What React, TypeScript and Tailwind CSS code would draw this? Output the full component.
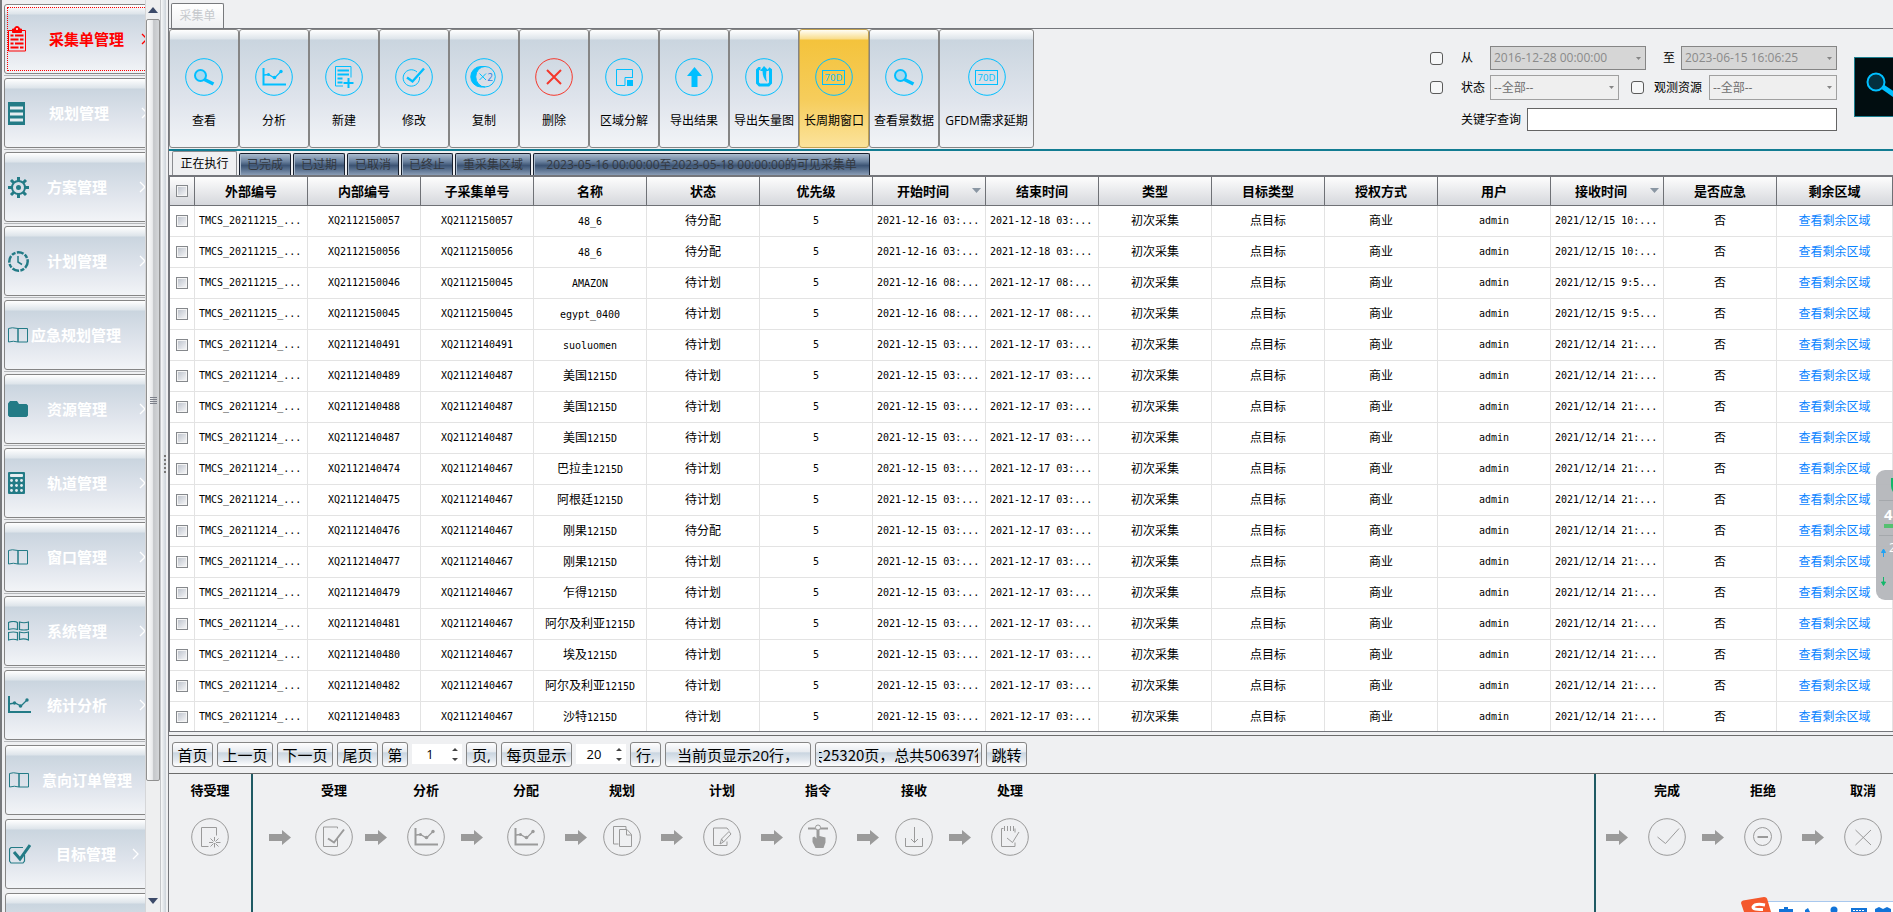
import React from 'react'
import clsx from 'clsx'

const glossy =
    'bg-[linear-gradient(to_bottom,#ffffff_0px,#dde4ea_9px,#cad5df_10px,#dfe4ec_60%,#f2f4f7_100%)]'

/* ---------- sidebar ---------- */

const TEAL = '#237b86'

const BookIcon = () => (
    <svg width="20" height="16" viewBox="0 0 20 16" fill="none" stroke={TEAL}>
        <path d="M.5 1.500q3-1.500 9.500 0v13.500q-4.500-1.500-9.500 0zM10 1.500h9.500v13.500h-9.500z" />
    </svg>
)

const ChartIcon = () => (
    <svg width="23" height="18" viewBox="0 0 23 18" fill="none" stroke={TEAL}>
        <path d="M1 0v16h22" strokeWidth="2" />
        <path d="M1 8l6-1 6 3 6-6" strokeWidth="1.300" />
        <g fill={TEAL} stroke="none">
            <circle cx="6.500" cy="7" r="1.700" /><circle cx="12.500" cy="10" r="1.800" /><circle cx="19" cy="4" r="1.700" />
        </g>
    </svg>
)

const menu = [
    {
        label: '采集单管理', space: 'ml-[18px] w-[92px]', active: true, arrow: true,
        icon: (
            <svg width="18" height="26" viewBox="0 0 18 26" fill="none" stroke="#f00">
                <path d="M4.500 4.500h-4v20.500h17v-20.500h-4" />
                <path d="M2.500 9.500h3M7 9.500h8.500M2.500 13.500h8M12 13.500h3.500M2.500 17.500h3M7 17.500h8.500M2.500 21.500h8M12 21.500h3.500" strokeWidth="2" />
                <path d="M4.500 3h2q0-2.500 2.500-2.500t2.500 2.500h2v3.500h-9z" fill="#f00" />
                <circle cx="9" cy="3" r="1" fill="#fff" stroke="none" />
            </svg>
        ),
    },
    {
        label: '规划管理', space: 'ml-[18px] w-[92px]', arrow: true,
        icon: (
            <svg width="17" height="23" viewBox="0 0 17 23">
                <path d="M0 0h17v23h-17z" fill={TEAL} />
                <path d="M2 6h13M2 12h13M2 18h13" stroke="#e6edf1" strokeWidth="3" />
            </svg>
        ),
    },
    {
        label: '方案管理', space: 'ml-4 w-[92px]', arrow: true,
        icon: (
            <svg width="21" height="21" viewBox="0 0 21 21" fill="none" stroke={TEAL}>
                <circle cx="10.500" cy="10.500" r="6.500" strokeWidth="2" />
                <circle cx="10.500" cy="10.500" r="2.500" fill={TEAL} stroke="none" />
                <path d="M10.500 0v4M10.500 17v4M0 10.500h4M17 10.500h4M3 3l3 3M15 15l3 3M18 3l-3 3M6 15l-3 3" strokeWidth="3" />
            </svg>
        ),
    },
    {
        label: '计划管理', space: 'ml-4 w-[92px]', arrow: true,
        icon: (
            <svg width="21" height="21" viewBox="0 0 21 21" fill="none" stroke={TEAL} strokeWidth="2.500">
                <circle cx="10.500" cy="10.500" r="9.200" strokeDasharray="7 1.400 4 1.400" />
                <path d="M10 5v6l4 2.500" strokeWidth="1.500" />
            </svg>
        ),
    },
    { label: '应急规划管理', space: 'ml-0 w-[92px]', icon: <BookIcon /> },
    {
        label: '资源管理', space: 'ml-4 w-[92px]', arrow: true,
        icon: (
            <svg width="20" height="16" viewBox="0 0 20 16">
                <path d="M0 2.500L2 0h7l2 3h7.500L20 4.500V14.500L18.500 16h-17L0 14.500z" fill={TEAL} />
            </svg>
        ),
    },
    {
        label: '轨道管理', space: 'ml-4 w-[92px]', arrow: true,
        icon: (
            <svg width="17" height="22" viewBox="0 0 17 22">
                <rect width="17" height="22" rx="1" fill={TEAL} />
                <rect x="2" y="2" width="13" height="3" rx="1" fill="#e6edf1" />
                <g fill="#e6edf1">
                    {[8.5, 13.5, 18.5].map((y) => [3.5, 8.5, 13.5].map((x) => <circle key={x + '-' + y} cx={x} cy={y} r="1.400" />))}
                </g>
            </svg>
        ),
    },
    { label: '窗口管理', space: 'ml-4 w-[92px]', arrow: true, icon: <BookIcon /> },
    {
        label: '系统管理', space: 'ml-4 w-[92px]', arrow: true,
        icon: (
            <svg width="21" height="20" viewBox="0 0 21 20" fill="none" stroke={TEAL}>
                <path d="M.5 1.500q5-2 9 0v7q-4-1.500-9 0zM11.500 1q4.500 1.500 9 0v7.500q-4.500 1-9 0zM.5 11.500q5-1 9 0v7.500q-4-1.500-9 0zM11.500 11q4.500 1.500 9 0v8q-4.500-2-9-.5z" strokeWidth="1.200" />
            </svg>
        ),
    },
    { label: '统计分析', space: 'ml-4 w-[92px]', arrow: true, icon: <ChartIcon /> },
    { label: '意向订单管理', space: 'ml-[10px] w-[92px]', icon: <BookIcon /> },
    {
        label: '目标管理', space: 'ml-6 w-[76px]', arrow: true,
        icon: (
            <svg width="22" height="20" viewBox="0 0 22 20" fill="none" stroke={TEAL}>
                <path d="M14 3.500h-12l-1.500 1.500v12l1.500 2h12l1.500-2v-6" strokeWidth="1.200" />
                <path d="M5 8l6 7L21 1" strokeWidth="3" />
            </svg>
        ),
    },
    { label: '', space: 'w-0', icon: null },
]

const Sidebar = () => (
    <aside className="flex w-[166px] shrink-0 border-l-2 border-[#77797c]">
        <nav className="flex min-w-0 flex-1 flex-col overflow-hidden pl-[2px] pt-1">
            {menu.map((item, i) => (
                <div key={i} className={clsx('flex h-[74px] shrink-0 flex-col', i > 9 && 'pl-px pt-px')}>
                    <button
                        className={clsx(
                            'flex h-[70px] w-[160px] shrink-0 items-center rounded-[3px] border border-[#858585] p-[2px] text-[15px] font-bold',
                            glossy,
                            item.active ? 'text-[#f00]' : 'text-white'
                        )}
                    >
                        <span className={clsx('flex h-full w-full items-center', item.active && 'border border-dotted border-[#f00]')}>
                            <span className={clsx('flex shrink-0', item.active ? 'w-[23px]' : 'w-6 pl-px')}>{item.icon}</span>
                            <span className={clsx('shrink-0 whitespace-nowrap text-left leading-5', item.space)}>{item.label}</span>
                            {item.arrow && (
                                <svg width="7" height="12" viewBox="0 0 7 12" fill="none" stroke="currentColor" strokeWidth="1.300" className="shrink-0">
                                    <path d="M1 1l5 5-5 5" />
                                </svg>
                            )}
                        </span>
                    </button>
                    {i < 10 && <div className="mt-px h-px shrink-0 bg-[#b5b7ba]" />}
                </div>
            ))}
        </nav>
        <div className="flex w-[15px] shrink-0 flex-col border-l border-[#d5d6d8] bg-[#eeeff0] pt-1">
            <button aria-label="up" className="flex h-[15px] shrink-0 justify-center pt-[3px]">
                <svg width="10" height="6"><path d="M5 0l5 6H0z" fill="#3c4a69" /></svg>
            </button>
            <div className="flex h-[762px] shrink-0 flex-col items-center justify-center gap-px rounded-[2px] border border-[#909090] bg-[linear-gradient(to_right,#fdfdfd_0%,#e9eaec_45%,#c5c7ca_55%,#d4d6d9_100%)]">
                {[0, 1, 2, 3].map((n) => <span key={n} className="h-px w-[7px] bg-[#7d808a]" />)}
            </div>
            <span className="flex-1" />
            <button aria-label="down" className="flex h-[21px] shrink-0 justify-center pt-[7px]">
                <svg width="10" height="6"><path d="M0 0h10L5 6z" fill="#3c4a69" /></svg>
            </button>
        </div>
        <div className="flex w-[6px] shrink-0 flex-col items-end justify-center gap-[2px] border-l border-[#c4c6c9] bg-[linear-gradient(to_right,#f7f8f9,#ccd3da)] pt-4">
            {[0, 1, 2, 3, 4].map((n) => <span key={n} className="size-[2px] bg-[#777]" />)}
        </div>
    </aside>
)

/* ---------- toolbar ---------- */

const BLUE = '#00bfff'

const Round = ({ color, children }: { color: string; children: React.ReactNode }) => (
    <svg width="38" height="38" viewBox="0 0 38 38" fill="none" stroke={color} className="shrink-0">
        <circle cx="19" cy="19" r="18.300" />
        {children}
    </svg>
)

const Search = () => (
    <>
        <path d="M19.500 21.500L28.500 26" strokeWidth="3.500" />
        <circle cx="15.500" cy="17.500" r="5.500" fill="#a9d8ee" strokeWidth="2" />
    </>
)

const Trend = ({ color }: { color: string }) => (
    <>
        <path d="M8.500 10v16.500H31" strokeWidth="2" />
        <path d="M9 17l4.500-.5 6 3.500 6.500-6.500" strokeWidth="1.300" />
        <g fill={color} stroke="none">
            <circle cx="13.500" cy="16.500" r="1.500" /><circle cx="19.500" cy="19.500" r="1.800" /><circle cx="26" cy="13.500" r="1.700" />
        </g>
    </>
)

const Days = () => (
    <>
        <rect x="7.500" y="12.500" width="22" height="14" />
        <text x="18.500" y="23" textAnchor="middle" fontSize="9.500" fill={BLUE} stroke="none" className="font-['Open_Sans',sans-serif]">70D</text>
    </>
)

const tools = [
    { label: '查看', icon: <Search /> },
    { label: '分析', icon: <Trend color={BLUE} /> },
    {
        label: '新建',
        icon: (
            <>
                <path d="M26 19.500v-11h-15.500v19.500h7.500" />
                <path d="M12.500 12.500h11.500M12.500 16.500h11.500M12.500 20.500h5M12.500 24.500h5" strokeWidth="2" />
                <path d="M23.500 20v10M18.500 25h10" strokeWidth="2" />
            </>
        ),
    },
    {
        label: '修改',
        icon: (
            <>
                <path d="M22 14a8.200 8.200 0 1 0 2.500 5" />
                <path d="M12 19.500l5.500 4L29 10.500" strokeWidth="2.400" />
            </>
        ),
    },
    {
        label: '复制',
        icon: (
            <>
                <path d="M20 8.500h-4a10.200 10.200 0 0 0 0 20.500h4a9.200 10.200 0 0 1 0-20.500z" fill={BLUE} />
                <path d="M20 8.500a10.200 10.200 0 0 1 0 20.500" />
                <path d="M14.500 15.500l6.500 6.500M21 15.500l-6.500 6.500" />
                <text x="25" y="22.500" textAnchor="middle" fontSize="10" fill="#2f7fe0" stroke="none" className="font-['Open_Sans',sans-serif]">2</text>
            </>
        ),
    },
    { label: '删除', color: '#f4382c', icon: <path d="M12 12l14 14M26 12L12 26" strokeWidth="2" /> },
    {
        label: '区域分解',
        icon: (
            <>
                <path d="M27.500 20v-8.500h-16v16h8.500v-8h7.500" />
                <path d="M22 22h6v6h-6z" fill={BLUE} stroke="none" />
            </>
        ),
    },
    { label: '导出结果', icon: <path d="M19.500 9l7.500 9h-4.500v11h-6v-11h-4.500z" fill={BLUE} stroke="none" /> },
    {
        label: '导出矢量图',
        icon: (
            <>
                <path d="M15.500 10.500h-1.500l-1.500 1.500v13l2 2h9l2-2v-13l-2-1.500" strokeWidth="3" />
                <path d="M22 24q-4.500-4-4.500-11h-2.500l4-5 5 5h-2.500q-1 6 .5 11z" fill={BLUE} stroke="none" />
            </>
        ),
    },
    { label: '长周期窗口', on: true, icon: <Days /> },
    { label: '查看景数据', icon: <Search /> },
    { label: 'GFDM需求延期', wide: true, icon: <Days /> },
]

const Toolbar = () => (
    <div className="flex">
        {tools.map((tool) => (
            <button
                key={tool.label}
                className={clsx(
                    'flex h-[119px] shrink-0 flex-col items-center gap-4 rounded-[3px] border pt-7',
                    tool.wide ? 'w-[95px]' : 'w-[70px]',
                    tool.on
                        ? 'border-[#c0a050] bg-[linear-gradient(to_bottom,#fffdf5_0px,#f9dd8a_9px,#f4c33c_10px,#f6cd5c_60%,#fbe39c_100%)]'
                        : 'border-[#858585] ' + glossy
                )}
            >
                <Round color={tool.color || BLUE}>{tool.icon}</Round>
                <span className="whitespace-nowrap leading-[18px]">{tool.label}</span>
            </button>
        ))}
    </div>
)

/* ---------- filters ---------- */

const Tick = ({ label, className }: { label: string; className?: string }) => (
    <input type="checkbox" aria-label={label} className={clsx('size-[13px] shrink-0 appearance-none rounded-[3px] border border-[#5a5a5a] bg-[#f6f7f8]', className)} />
)

const Drop = ({ id, value, date, className }: { id: string; value: string; date?: boolean; className: string }) => (
    <span className={clsx('relative shrink-0', className)}>
        <select
            id={id}
            disabled
            className={clsx(
                'block w-full appearance-none border pl-[3px] leading-4 opacity-100',
                date ? 'h-6 border-[#858585] bg-[#d6d6d6] text-[#8a8a8a]' : 'h-[25px] border-[#a0a0a0] bg-[#efefef] text-[#707070]'
            )}
        >
            <option>{value}</option>
        </select>
        <svg width="5" height="3" className="absolute right-[5px] top-[11px]"><path d="M0 0h5L2.500 3z" fill="#858585" /></svg>
    </span>
)

const Filters = () => (
    <div className="-mr-[21px] ml-auto flex items-start pt-[17px]">
        <div className="w-[407px]">
            <div className="flex items-center">
                <Tick label="时间" />
                <label htmlFor="from" className="ml-[18px] w-[29px]">从</label>
                <Drop id="from" date value="2016-12-28 00:00:00" className="w-[156px]" />
                <label htmlFor="to" className="ml-[17px] w-[18px]">至</label>
                <Drop id="to" date value="2023-06-15 16:06:25" className="w-[156px]" />
            </div>
            <div className="mt-[5px] flex items-center">
                <Tick label="状态" />
                <label htmlFor="status" className="ml-[18px] w-[29px]">状态</label>
                <Drop id="status" value="--全部--" className="w-[129px]" />
                <Tick label="观测资源" className="ml-3" />
                <label htmlFor="resource" className="ml-[10px] w-[55px]">观测资源</label>
                <Drop id="resource" value="--全部--" className="w-[128px]" />
            </div>
            <div className="mt-2 flex items-center pl-[31px]">
                <label htmlFor="keyword" className="w-[66px]">关键字查询</label>
                <input id="keyword" className="h-[23px] min-w-0 flex-1 border border-[#646464] bg-white px-1" />
            </div>
        </div>
        <button aria-label="查询" className="ml-[17px] mt-[11px] flex size-[60px] shrink-0 items-center border border-[#1a7f90] bg-[#010d10] pl-[11px]">
            <svg width="34" height="30" viewBox="0 0 34 30" fill="none" stroke={BLUE}>
                <path d="M17 15l16 11" strokeWidth="5" />
                <circle cx="10" cy="10" r="8.500" fill="#03303f" strokeWidth="2" />
            </svg>
        </button>
    </div>
)

/* ---------- table ---------- */

const tabs = ['已完成', '已过期', '已取消', '已终止', '重采集区域']

const heads = ['外部编号', '内部编号', '子采集单号', '名称', '状态', '优先级', '开始时间', '结束时间', '类型', '目标类型', '授权方式', '用户', '接收时间', '是否应急', '剩余区域']

// [id, sub id, chinese part of the name, latin part, status, start, end, received]
const rows = [
    ['XQ2112150057', 'XQ2112150057', '', '48_6', '待分配', '2021-12-16 03:...', '2021-12-18 03:...', '2021/12/15 10:...'],
    ['XQ2112150056', 'XQ2112150056', '', '48_6', '待分配', '2021-12-16 03:...', '2021-12-18 03:...', '2021/12/15 10:...'],
    ['XQ2112150046', 'XQ2112150045', '', 'AMAZON', '待计划', '2021-12-16 08:...', '2021-12-17 08:...', '2021/12/15 9:5...'],
    ['XQ2112150045', 'XQ2112150045', '', 'egypt_0400', '待计划', '2021-12-16 08:...', '2021-12-17 08:...', '2021/12/15 9:5...'],
    ['XQ2112140491', 'XQ2112140491', '', 'suoluomen', '待计划', '2021-12-15 03:...', '2021-12-17 03:...', '2021/12/14 21:...'],
    ['XQ2112140489', 'XQ2112140487', '美国', '1215D', '待计划', '2021-12-15 03:...', '2021-12-17 03:...', '2021/12/14 21:...'],
    ['XQ2112140488', 'XQ2112140487', '美国', '1215D', '待计划', '2021-12-15 03:...', '2021-12-17 03:...', '2021/12/14 21:...'],
    ['XQ2112140487', 'XQ2112140487', '美国', '1215D', '待计划', '2021-12-15 03:...', '2021-12-17 03:...', '2021/12/14 21:...'],
    ['XQ2112140474', 'XQ2112140467', '巴拉圭', '1215D', '待计划', '2021-12-15 03:...', '2021-12-17 03:...', '2021/12/14 21:...'],
    ['XQ2112140475', 'XQ2112140467', '阿根廷', '1215D', '待计划', '2021-12-15 03:...', '2021-12-17 03:...', '2021/12/14 21:...'],
    ['XQ2112140476', 'XQ2112140467', '刚果', '1215D', '待分配', '2021-12-15 03:...', '2021-12-17 03:...', '2021/12/14 21:...'],
    ['XQ2112140477', 'XQ2112140467', '刚果', '1215D', '待计划', '2021-12-15 03:...', '2021-12-17 03:...', '2021/12/14 21:...'],
    ['XQ2112140479', 'XQ2112140467', '乍得', '1215D', '待计划', '2021-12-15 03:...', '2021-12-17 03:...', '2021/12/14 21:...'],
    ['XQ2112140481', 'XQ2112140467', '阿尔及利亚', '1215D', '待计划', '2021-12-15 03:...', '2021-12-17 03:...', '2021/12/14 21:...'],
    ['XQ2112140480', 'XQ2112140467', '埃及', '1215D', '待计划', '2021-12-15 03:...', '2021-12-17 03:...', '2021/12/14 21:...'],
    ['XQ2112140482', 'XQ2112140467', '阿尔及利亚', '1215D', '待计划', '2021-12-15 03:...', '2021-12-17 03:...', '2021/12/14 21:...'],
    ['XQ2112140483', 'XQ2112140467', '沙特', '1215D', '待计划', '2021-12-15 03:...', '2021-12-17 03:...', '2021/12/14 21:...'],
]

const RowTick = ({ label }: { label: string }) => (
    <input
        type="checkbox"
        aria-label={label}
        className="mx-auto block size-3 appearance-none border border-[#85888c] bg-[linear-gradient(135deg,#b9bfc9,#fafafb)] shadow-[inset_0_0_0_1px_#f4f4f4]"
    />
)

const Td = ({ mono, left, children }: { mono?: boolean; left?: boolean; children: React.ReactNode }) => (
    <td
        className={clsx(
            'h-[31px] overflow-hidden whitespace-nowrap border-b border-r border-[#e3e3e3] leading-4',
            mono && "font-['DejaVu_Sans_Mono','Noto_Sans_CJK_SC',monospace] text-[10px]",
            left ? 'pl-1 text-left' : 'text-center'
        )}
    >
        {children}
    </td>
)

const OrderTable = () => (
    <div className="min-h-0 flex-1 overflow-hidden border-b border-l border-t-2 border-[#74767b] bg-white">
        <table className="w-full table-fixed border-separate border-spacing-0">
            <colgroup>
                <col className="w-[25px]" />
                {heads.map((h, i) => <col key={h} className={i < 14 ? 'w-[113px]' : ''} />)}
            </colgroup>
            <thead>
                <tr className="bg-[linear-gradient(to_bottom,#fdfdfd,#d4d6db)]">
                    <th className="h-[29px] border-b border-r border-[#6f7176] p-0"><RowTick label="全选" /></th>
                    {heads.map((h) => {
                        const sortable = h === '开始时间' || h === '接收时间'
                        return (
                            <th key={h} className={clsx('relative h-[29px] border-b border-r border-[#6f7176] p-0 text-[13px] font-bold leading-4', sortable && 'pr-3')}>
                                {h}
                                {sortable && (
                                    <svg width="9" height="5" className="absolute right-1 top-[11px]"><path d="M0 0h9L4.500 5z" fill="#8a96a3" /></svg>
                                )}
                            </th>
                        )
                    })}
                </tr>
            </thead>
            <tbody>
                {rows.map(([id, sub, cn, latin, status, start, end, received]) => (
                    <tr key={id}>
                        <Td><RowTick label={id} /></Td>
                        <Td mono left>TMCS_20{id.slice(2, 8)}_...</Td>
                        <Td mono>{id}</Td>
                        <Td mono>{sub}</Td>
                        <Td mono><span className="text-xs leading-4">{cn}</span>{latin}</Td>
                        <Td>{status}</Td>
                        <Td mono>5</Td>
                        <Td mono left>{start}</Td>
                        <Td mono left>{end}</Td>
                        <Td>初次采集</Td>
                        <Td>点目标</Td>
                        <Td>商业</Td>
                        <Td mono>admin</Td>
                        <Td mono left>{received}</Td>
                        <Td>否</Td>
                        <Td><a href="#area" className="text-[#0a84ff]">查看剩余区域</a></Td>
                    </tr>
                ))}
            </tbody>
        </table>
    </div>
)

/* ---------- pager ---------- */

const PageButton = ({ className, children }: { className: string; children: React.ReactNode }) => (
    <button
        className={clsx(
            'flex h-[25px] shrink-0 items-center justify-center overflow-hidden whitespace-nowrap rounded-[3px] border border-[#858585] bg-[linear-gradient(to_bottom,#fdfdfe_0%,#e6eaef_40%,#c9d5e0_42%,#e4e9ef_75%,#ffffff_100%)] text-[15px] leading-5',
            className
        )}
    >
        {children}
    </button>
)

const Spin = ({ value, label }: { value: string; label: string }) => (
    <span className="relative mt-[2px] h-5 w-[50px] shrink-0">
        <input aria-label={label} defaultValue={value} className="block h-5 w-full bg-white pr-[14px] text-center text-[13px] leading-5" />
        <svg width="6" height="14" className="absolute right-1 top-[3px]"><path d="M3 1l3 3H0zM0 11h6l-3 3z" fill="#444" /></svg>
    </span>
)

const Pager = () => (
    <div className="mt-[3px] flex h-[39px] shrink-0 items-start gap-1 border-y border-[#6c6c6c] pl-[3px] pt-[6px]">
        <PageButton className="w-[41px]">首页</PageButton>
        <PageButton className="w-14">上一页</PageButton>
        <PageButton className="w-14">下一页</PageButton>
        <PageButton className="w-[41px]">尾页</PageButton>
        <PageButton className="w-[26px]">第</PageButton>
        <Spin value="1" label="页码" />
        <PageButton className="w-[31px]">页,</PageButton>
        <PageButton className="w-[71px]">每页显示</PageButton>
        <Spin value="20" label="每页行数" />
        <PageButton className="w-[31px]">行,</PageButton>
        <PageButton className="w-[146px]">当前页显示20行，</PageButton>
        <PageButton className="w-[167px] px-[3px] font-['Noto_Sans_CJK_SC',sans-serif]">
            <span className="flex w-full justify-center overflow-hidden">共25320页，总共506397行</span>
        </PageButton>
        <PageButton className="w-[41px]">跳转</PageButton>
    </div>
)

/* ---------- workflow ---------- */

const GRAY = '#9a9a9a'

type StepProps = { label: string; lead?: string; gap?: string; icon: React.ReactNode }

const Step = ({ label, lead, gap, icon }: StepProps) => (
    <div className="flex items-end">
        {lead && (
            <span className={clsx('flex h-[38px] items-center', lead, gap)}>
                <svg width="22" height="15"><path d="M0 4h13V0l9 7.500-9 7.500V11H0z" fill={GRAY} /></svg>
            </span>
        )}
        <div className="flex w-[38px] flex-col items-center gap-5">
            <span className="whitespace-nowrap text-[13px] font-bold leading-4">{label}</span>
            <Round color={GRAY}>{icon}</Round>
        </div>
    </div>
)

const steps: StepProps[] = [
    {
        label: '受理', lead: 'ml-4', gap: 'mr-6',
        icon: (
            <>
                <path d="M22.500 10.500v-1.500h-14v19.500h14v-8" />
                <path d="M13 20.500l6 4L29 11.500" strokeWidth="2" />
            </>
        ),
    },
    { label: '分析', lead: 'ml-3', gap: 'mr-5', icon: <Trend color={GRAY} /> },
    { label: '分配', lead: 'ml-4', gap: 'mr-6', icon: <Trend color={GRAY} /> },
    {
        label: '规划', lead: 'ml-5', gap: 'mr-4',
        icon: (
            <>
                <path d="M23 11v-2.500h-12.500v17.500h5" />
                <path d="M16.500 11.500h7.500l4.500 5v12h-12zM23.500 11.500v5.500h5" />
            </>
        ),
    },
    {
        label: '计划', lead: 'ml-5', gap: 'mr-5',
        icon: (
            <>
                <path d="M26 12.500l-2-2.500h-13.500v17.500h13.500v-4" />
                <path d="M17 26l1.500-5 7.500-7.500 2 2.500-7.500 8zM18.500 21l2 3" />
            </>
        ),
    },
    {
        label: '指令', lead: 'ml-5', gap: 'mr-4',
        icon: (
            <>
                <path d="M9 10.500h20" strokeWidth="2" />
                <circle cx="19" cy="9.500" r="2.500" fill="#eff0f2" />
                <path d="M17.500 12h3v6l6 1.500v5l-2 5.500h-8l-3-6v-4.500l2-1 2 2z" fill={GRAY} stroke="none" />
            </>
        ),
    },
    {
        label: '接收', lead: 'ml-5', gap: 'mr-4',
        icon: <path d="M19.500 9v15.500M16 21l3.500 3.500L23 21M10.500 20v8.500h17v-8.500" />,
    },
    {
        label: '处理', lead: 'ml-4', gap: 'mr-5',
        icon: (
            <>
                <path d="M12.500 10.500h-2v18h13.500v-4M13.500 8v5M16.500 8v5M19.500 8v5M22.500 8v5M24 10.500v4" />
                <path d="M16 20l5.500 4.500L28 14" />
            </>
        ),
    },
]

const finals: StepProps[] = [
    { label: '完成', lead: 'ml-[10px]', gap: 'mr-5', icon: <path d="M9.500 19l8 6.500L31 10.500" /> },
    {
        label: '拒绝', lead: 'ml-4', gap: 'mr-5',
        icon: (
            <>
                <circle cx="18.500" cy="18.500" r="9" />
                <path d="M13.500 19h10.500" strokeWidth="2" />
            </>
        ),
    },
    { label: '取消', lead: 'ml-5', gap: 'mr-5', icon: <path d="M11.500 12l15.500 15M27 12L11.500 27" /> },
]

const Workflow = () => (
    <div className="flex h-[138px] shrink-0">
        <div className="flex w-[84px] shrink-0 items-start justify-center border-r-2 border-[#1f5a64] pt-2">
            <Step
                label="待受理"
                icon={
                    <>
                        <path d="M25.500 17.500v-8h-15v19h7" />
                        <path d="M23.500 19v4M23.500 25v4.500M18 24.500h4M25 24.500h4.500M19.500 20.500l3 3M24.500 25.500l3 3M27.500 20.500l-3 3M22.500 25.500l-3 3" />
                    </>
                }
            />
        </div>
        <div className="flex items-start pt-2">{steps.map((s) => <Step key={s.label} {...s} />)}</div>
        <div className="ml-auto flex w-[299px] shrink-0 items-start border-l-2 border-[#1f5a64] pt-2">
            {finals.map((s) => <Step key={s.label} {...s} />)}
        </div>
    </div>
)

/* ---------- desktop overlays ---------- */

const NetWidget = () => (
    <div className="absolute right-0 top-[470px] h-[130px] w-[17px] overflow-hidden rounded-l-[9px] bg-[#b4b6ba]/95 text-white">
        <svg width="17" height="130" className="absolute inset-0" fill="none">
            <path d="M15 8h2v14q-2-3-2-6z" fill="#12b76a" />
            <path d="M3 30.500h14M3 65.500h14" stroke="#a5a8ac" />
            <rect x="8" y="54" width="9" height="4" fill="#55c070" />
            <path d="M7.500 87v-6M5.500 82.500h4l-2-3.500z" stroke="#1fa2f5" fill="#1fa2f5" />
            <path d="M7.500 107v5M5.500 112h4l-2 3.500z" stroke="#12b76a" fill="#12b76a" />
        </svg>
        <span className="absolute left-2 top-9 text-[15px] font-bold leading-4">4</span>
        <span className="absolute left-[13px] top-[70px] leading-4">2</span>
    </div>
)

const InputBar = () => (
    <svg width="152" height="15" viewBox="0 0 152 15" className="absolute bottom-0 right-0">
        <path d="M26 5h126v10H26z" fill="#fff" />
        <path d="M26 4.500h126" stroke="#a8c8ee" />
        <path d="M0 6q0-2 2-2.500L23 0q3 0 3.500 3L30 15H3z" fill="#f4582c" />
        <path d="M24 8q-10-2-12 2 0 3 10 2.500" fill="none" stroke="#fff" strokeWidth="3" />
        <g fill="#1173d8">
            <path d="M38 12h14v3H38zM43 10h4v2h-4zM64 13l3-2 2 4h-5z" />
            <circle cx="93" cy="13" r="3.500" />
            <path d="M110 11h16v4h-16zM134 12l4-2 4 2 4-2 4 2v3h-16z" />
        </g>
        <path d="M112 13.500h12" stroke="#fff" strokeDasharray="2 1" />
    </svg>
)

export default function App() {
    return (
        <div className="relative flex h-screen overflow-hidden bg-[#eff0f2] font-['Open_Sans','Noto_Sans_CJK_SC',sans-serif] text-xs text-black">
            <Sidebar />
            <main className="ml-[2px] flex min-w-0 flex-1 flex-col border-l border-[#74767b]">
                <div className="flex h-[29px] shrink-0 items-end border-b border-[#74767b] pl-[2px]">
                    <button className="h-[25px] w-[53px] rounded-t-[2px] border border-b-0 border-[#77797c] bg-[linear-gradient(to_bottom,#ffffff,#eff0f2)] leading-5 text-[#c6c9cd]">采集单</button>
                </div>
                <div className="flex h-[122px] shrink-0 overflow-hidden border-b-2 border-[#127c92]">
                    <Toolbar />
                    <Filters />
                </div>
                <div className="flex h-6 shrink-0 items-end gap-[2px] pl-[3px]">
                    <button className="h-6 w-[65px] rounded-t-[2px] border border-b-0 border-[#8a8c90] bg-[#eff0f2] leading-5">正在执行</button>
                    {[...tabs, '2023-05-16 00:00:00至2023-05-18 00:00:00的可见采集单'].map((t) => (
                        <button
                            key={t}
                            className={clsx(
                                'h-[22px] whitespace-nowrap rounded-t-[2px] border border-b-0 border-[#17202f] bg-[linear-gradient(to_bottom,#a9bacd_0%,#6c83a0_35%,#3c5474_55%,#5b7290_75%,#8a9db6_100%)] leading-5 text-[#33383f] shadow-[inset_1px_1px_0_#a9bacd]',
                                t.length > 10 ? 'w-[337px]' : 'px-[7px]'
                            )}
                        >
                            {t}
                        </button>
                    ))}
                </div>
                <OrderTable />
                <Pager />
                <Workflow />
            </main>
            <NetWidget />
            <InputBar />
        </div>
    )
}
